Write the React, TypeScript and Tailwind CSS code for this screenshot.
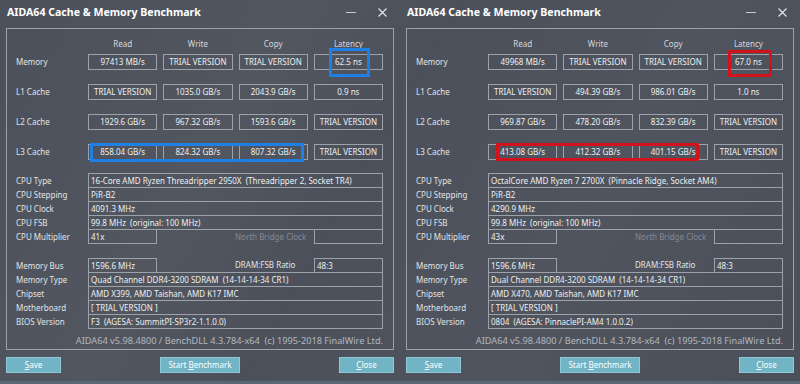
import React from "react";

type Data = {
  top: { label: string; vals: string[] }[];
  cpu: string[];
  mult: string;
  mem: string[];
  bus: string;
  ratio: string;
};

const left: Data = {
  top: [
    { label: "Memory", vals: ["97413 MB/s", "TRIAL VERSION", "TRIAL VERSION", "62.5 ns"] },
    { label: "L1 Cache", vals: ["TRIAL VERSION", "1035.0 GB/s", "2043.9 GB/s", "0.9 ns"] },
    { label: "L2 Cache", vals: ["1929.6 GB/s", "967.32 GB/s", "1593.6 GB/s", "TRIAL VERSION"] },
    { label: "L3 Cache", vals: ["858.04 GB/s", "824.32 GB/s", "807.32 GB/s", "TRIAL VERSION"] },
  ],
  cpu: [
    "16-Core AMD Ryzen Threadripper 2950X  (Threadripper 2, Socket TR4)",
    "PiR-B2",
    "4091.3 MHz",
    "99.8 MHz  (original: 100 MHz)",
  ],
  mult: "41x",
  bus: "1596.6 MHz",
  ratio: "48:3",
  mem: [
    "Quad Channel DDR4-3200 SDRAM  (14-14-14-34 CR1)",
    "AMD X399, AMD Taishan, AMD K17 IMC",
    "[ TRIAL VERSION ]",
    "F3  (AGESA: SummitPI-SP3r2-1.1.0.0)",
  ],
};

const right: Data = {
  top: [
    { label: "Memory", vals: ["49968 MB/s", "TRIAL VERSION", "TRIAL VERSION", "67.0 ns"] },
    { label: "L1 Cache", vals: ["TRIAL VERSION", "494.39 GB/s", "986.01 GB/s", "1.0 ns"] },
    { label: "L2 Cache", vals: ["969.87 GB/s", "478.20 GB/s", "832.39 GB/s", "TRIAL VERSION"] },
    { label: "L3 Cache", vals: ["413.08 GB/s", "412.32 GB/s", "401.15 GB/s", "TRIAL VERSION"] },
  ],
  cpu: [
    "OctalCore AMD Ryzen 7 2700X  (Pinnacle Ridge, Socket AM4)",
    "PiR-B2",
    "4290.9 MHz",
    "99.8 MHz  (original: 100 MHz)",
  ],
  mult: "43x",
  bus: "1596.6 MHz",
  ratio: "48:3",
  mem: [
    "Dual Channel DDR4-3200 SDRAM  (14-14-14-34 CR1)",
    "AMD X470, AMD Taishan, AMD K17 IMC",
    "[ TRIAL VERSION ]",
    "0804  (AGESA: PinnaclePI-AM4 1.0.0.2)",
  ],
};

const cpuLabels = ["CPU Type", "CPU Stepping", "CPU Clock", "CPU FSB"];
const memLabels = ["Memory Type", "Chipset", "Motherboard", "BIOS Version"];

function InfoRow({ label, value, first }: { label: string; value: string; first?: boolean }) {
  return (
    <div className={`flex h-[15px] items-center ${first ? "" : "-mt-px"}`}>
      <div className="w-[72px] text-[#e1e4e8]">{label}</div>
      <div className="flex h-[15px] flex-1 items-center border border-[#9da1a9] pl-[2px] text-[#eef0f2] whitespace-pre">
        {value}
      </div>
    </div>
  );
}

function SplitRow({ label, a, mid, b }: { label: string; a: string; mid: string; b: string }) {
  return (
    <div className="-mt-px flex h-[15px] items-center">
      <div className="w-[72px] text-[#e1e4e8]">{label}</div>
      <div className="flex h-[15px] w-[69px] items-center border border-[#9da1a9] pl-[2px] text-[#eef0f2]">{a}</div>
      <div className="h-[15px] flex-1 border-t border-[#9da1a9] pl-[78px] leading-[14px] text-[#858a93]">{mid}</div>
      <div className="flex h-[15px] w-[69px] items-center border border-[#9da1a9] pl-[2px] text-[#eef0f2]">{b}</div>
    </div>
  );
}

function SplitRowTop({ label, a, mid, b }: { label: string; a: string; mid: string; b: string }) {
  return (
    <div className="flex h-[15px] items-center">
      <div className="w-[72px] text-[#e1e4e8]">{label}</div>
      <div className="flex h-[15px] w-[69px] items-center border border-[#9da1a9] pl-[2px] text-[#eef0f2]">{a}</div>
      <div className="h-[15px] flex-1 border-b border-[#9da1a9] pl-[78px] leading-[14px] text-[#e1e4e8]">{mid}</div>
      <div className="flex h-[15px] w-[69px] items-center border border-[#9da1a9] pl-[2px] text-[#eef0f2]">{b}</div>
    </div>
  );
}

function Btn({ w, children }: { w: string; children: React.ReactNode }) {
  return (
    <div className={`${w} flex h-[16px] items-center justify-center border border-[#8fc9d7] bg-[#70b4c6] text-white`}>
      {children}
    </div>
  );
}

function Window({ d, color, hl }: { d: Data; color: string; hl: "blue" | "red" }) {
  return (
    <div className="relative flex h-[384px] w-[400px] flex-col">
      <div className="flex h-[25px] items-center pl-[7px] pr-[13px]">
        <div className="text-[10.6px] font-bold text-white">AIDA64 Cache &amp; Memory Benchmark</div>
        <div className="ml-auto mr-[22px] h-px w-[10px] bg-[#c9ccd2]" />
        <svg width="9" height="9" viewBox="0 0 9 9" className="mb-[1px]">
          <path d="M0.5 0.5 L8.5 8.5 M8.5 0.5 L0.5 8.5" stroke="#e6e8ec" strokeWidth="1.1" />
        </svg>
      </div>
      <div className="mx-[6px] mt-[3px] flex h-[322px] flex-col border border-[#9da1a9] pl-[9px] pr-[10px]">
        <div className="mt-[8px] flex h-[14px] items-center">
          <div className="w-[72px]" />
          <div className="grid flex-1 grid-cols-4 gap-[6px] text-center text-[#d5d8dd]">
            <div>Read</div>
            <div>Write</div>
            <div>Copy</div>
            <div>Latency</div>
          </div>
        </div>
        {d.top.map((r, i) => (
          <div key={r.label} className={`flex h-[16px] items-center ${i === 0 ? "mt-[3px]" : "mt-[14px]"}`}>
            <div className="w-[72px] text-[#e1e4e8]">{r.label}</div>
            <div className="grid flex-1 grid-cols-4 gap-[6px]">
              {r.vals.map((v, j) => (
                <div key={j} className="flex h-[16px] items-center justify-center border border-[#9da1a9] text-[#eef0f2]">
                  {v}
                </div>
              ))}
            </div>
          </div>
        ))}
        <div className="mt-[13px] flex flex-col">
          {d.cpu.map((v, i) => (
            <InfoRow key={i} label={cpuLabels[i]} value={v} first={i === 0} />
          ))}
          <SplitRow label="CPU Multiplier" a={d.mult} mid="North Bridge Clock" b="" />
        </div>
        <div className="mt-[14px] flex flex-col">
          <SplitRowTop label="Memory Bus" a={d.bus} mid="DRAM:FSB Ratio" b={d.ratio} />
          {d.mem.map((v, i) => (
            <InfoRow key={i} label={memLabels[i]} value={v} />
          ))}
        </div>
        <div className="mt-[5px] h-[14px] text-right text-[9.2px] leading-[14px] text-[#b4b8bf] whitespace-pre">
          AIDA64 v5.98.4800 / BenchDLL 4.3.784-x64  (c) 1995-2018 FinalWire Ltd.
        </div>
      </div>
      <div className="mt-[7px] flex justify-between px-[6px]">
        <Btn w="w-[55px]">
          <span className="underline">S</span>ave
        </Btn>
        <Btn w="w-[80px]">
          Start&nbsp;<span className="underline">B</span>enchmark
        </Btn>
        <Btn w="w-[55px]">
          <span className="underline">C</span>lose
        </Btn>
      </div>
      {hl === "blue" ? (
        <>
          <div className={`pointer-events-none absolute left-[329px] top-[48px] h-[29px] w-[41px] border-[3px] ${color}`} />
          <div className={`pointer-events-none absolute left-[90px] top-[143px] h-[19px] w-[214px] border-[3px] ${color}`} />
        </>
      ) : (
        <>
          <div className={`pointer-events-none absolute left-[328px] top-[50px] h-[27px] w-[44px] border-[3px] ${color}`} />
          <div className={`pointer-events-none absolute left-[96px] top-[143px] h-[18px] w-[203px] border-[3px] ${color}`} />
        </>
      )}
    </div>
  );
}

export default function App() {
  return (
    <div
      className="relative flex h-[384px] w-[800px] overflow-hidden bg-[#4c515c] bg-[linear-gradient(120deg,#4b505b_0%,#51565f_30%,#4b505b_45%,#4f545e_70%,#4a4f5a_100%)] text-[8px] leading-none"
      style={{ fontFamily: '"Noto Sans", "Open Sans", sans-serif' }}
    >
      <Window d={left} color="border-[#1f7fe4]" hl="blue" />
      <Window d={right} color="border-[#d3131b]" hl="red" />
      <div className="absolute bottom-0 left-0 h-[3px] w-[800px] bg-[#5b6776]" />
    </div>
  );
}
